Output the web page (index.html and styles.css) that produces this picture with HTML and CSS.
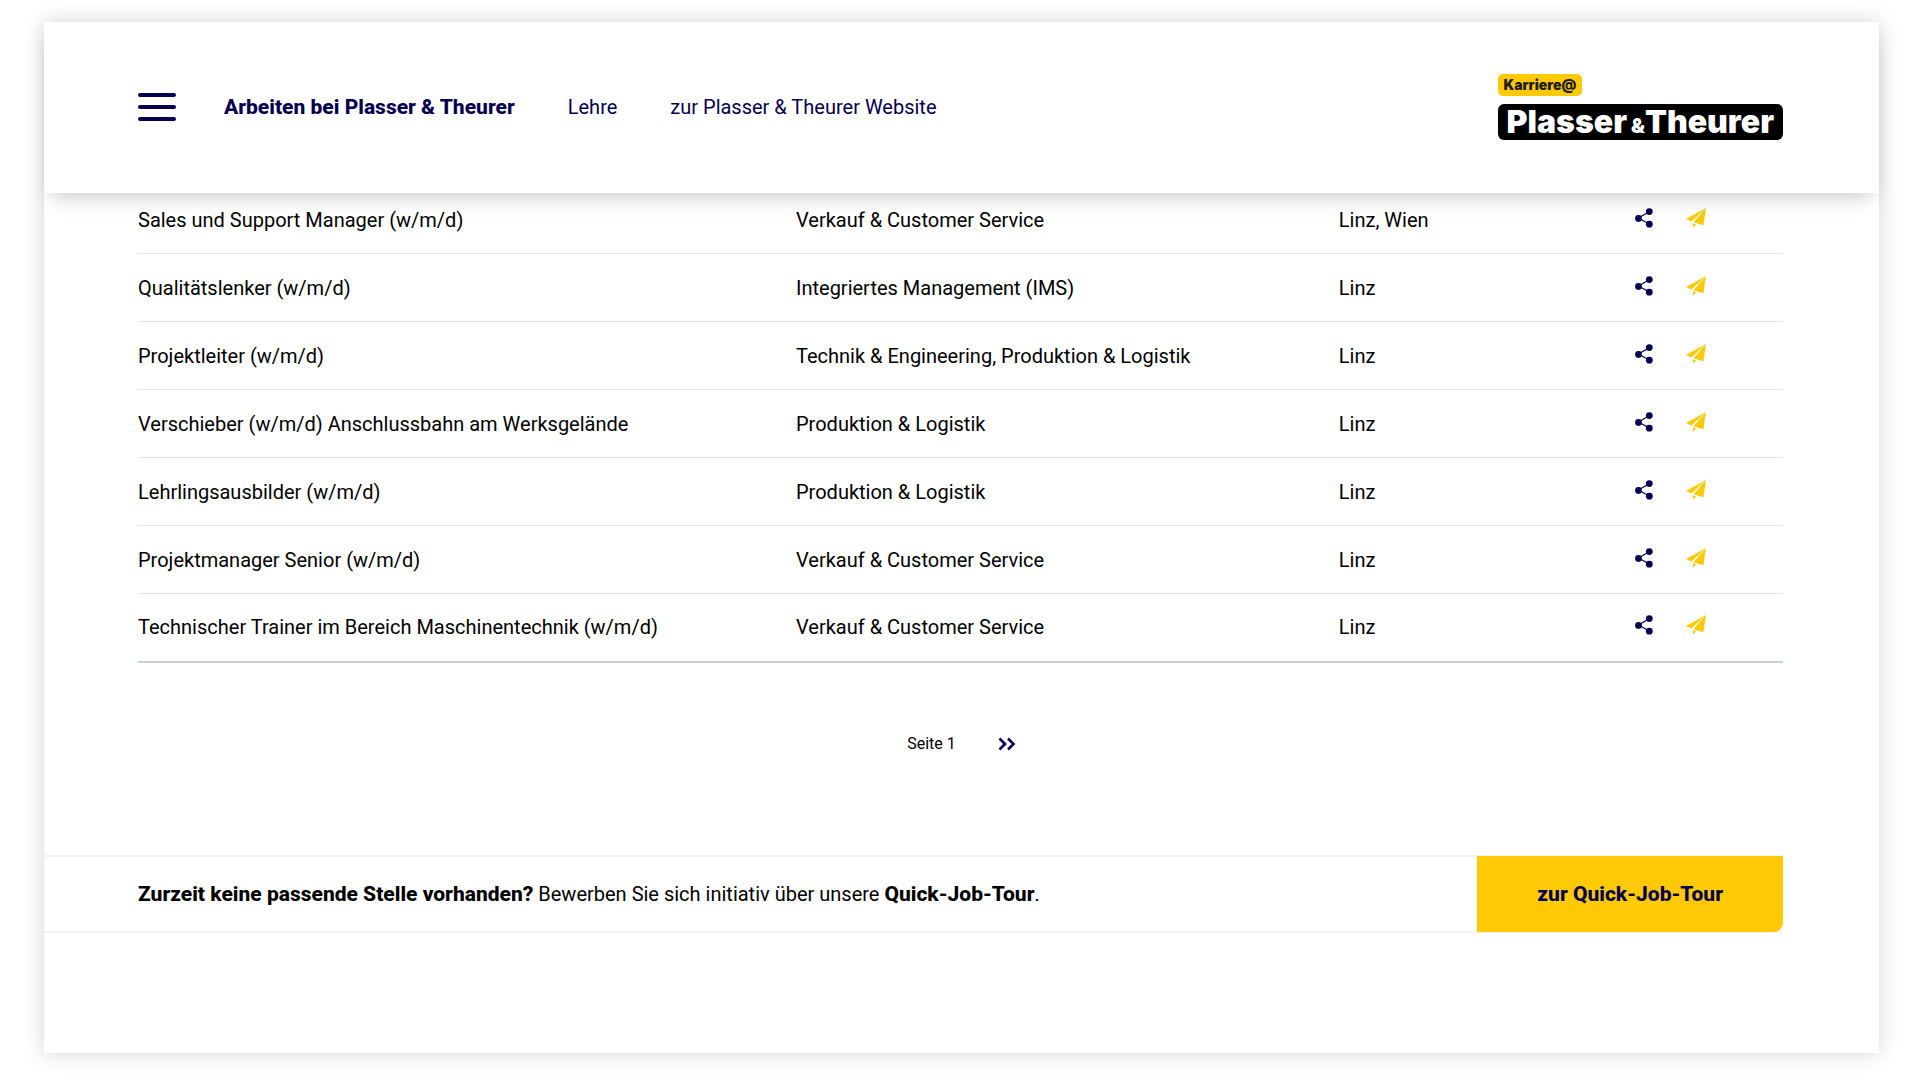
FILE: index.html
```html
<!DOCTYPE html>
<html lang="de">
<head>
<meta charset="utf-8">
<meta name="viewport" content="width=device-width, initial-scale=1">
<title>Karriere | Plasser &amp; Theurer</title>
<link rel="stylesheet" href="styles.css">
</head>
<body>
<svg class="sprite" aria-hidden="true">
  <symbol id="share" viewBox="0 0 18 20">
    <path d="M14.5 3.5 3.5 10l11 6.2" fill="none" stroke="currentColor" stroke-width="1.2"/>
    <circle cx="14.3" cy="3.6" r="3.4" fill="currentColor"/>
    <circle cx="3.5" cy="10.4" r="3.4" fill="currentColor"/>
    <circle cx="14.3" cy="16.2" r="3.4" fill="currentColor"/>
  </symbol>
  <symbol id="plane" viewBox="0 0 20 20">
    <path d="M20 0 0 11l5.300 2.500zM20 0 7.500 14.200l9.800 3.100zM7 15.200v4.600l3.200-3.600z" fill="currentColor"/>
  </symbol>
</svg>
<div class="page">
  <header class="header">
    <button class="burger" type="button" aria-label="Menü"><span></span><span></span><span></span></button>
    <nav class="nav">
      <a class="active" href="#">Arbeiten bei Plasser &amp; Theurer</a>
      <a href="#">Lehre</a>
      <a href="#">zur Plasser &amp; Theurer Website</a>
    </nav>
    <a class="logo" href="#">
      <span class="logo-tag">Karriere@</span>
      <span class="logo-name">Plasser<small>&amp;</small>Theurer</span>
    </a>
  </header>
  <main>
    <table class="jobs">
      <tbody>
        <tr><td>Sales und Support Manager (w/m/d)</td><td>Verkauf &amp; Customer Service</td><td>Linz, Wien</td><td><div class="actions"><button type="button" class="share" aria-label="Teilen"><svg><use href="#share"/></svg></button><a href="#" class="apply" aria-label="Bewerben"><svg><use href="#plane"/></svg></a></div></td></tr>
        <tr><td>Qualitätslenker (w/m/d)</td><td>Integriertes Management (IMS)</td><td>Linz</td><td><div class="actions"><button type="button" class="share" aria-label="Teilen"><svg><use href="#share"/></svg></button><a href="#" class="apply" aria-label="Bewerben"><svg><use href="#plane"/></svg></a></div></td></tr>
        <tr><td>Projektleiter (w/m/d)</td><td>Technik &amp; Engineering, Produktion &amp; Logistik</td><td>Linz</td><td><div class="actions"><button type="button" class="share" aria-label="Teilen"><svg><use href="#share"/></svg></button><a href="#" class="apply" aria-label="Bewerben"><svg><use href="#plane"/></svg></a></div></td></tr>
        <tr><td>Verschieber (w/m/d) Anschlussbahn am Werksgelände</td><td>Produktion &amp; Logistik</td><td>Linz</td><td><div class="actions"><button type="button" class="share" aria-label="Teilen"><svg><use href="#share"/></svg></button><a href="#" class="apply" aria-label="Bewerben"><svg><use href="#plane"/></svg></a></div></td></tr>
        <tr><td>Lehrlingsausbilder (w/m/d)</td><td>Produktion &amp; Logistik</td><td>Linz</td><td><div class="actions"><button type="button" class="share" aria-label="Teilen"><svg><use href="#share"/></svg></button><a href="#" class="apply" aria-label="Bewerben"><svg><use href="#plane"/></svg></a></div></td></tr>
        <tr><td>Projektmanager Senior (w/m/d)</td><td>Verkauf &amp; Customer Service</td><td>Linz</td><td><div class="actions"><button type="button" class="share" aria-label="Teilen"><svg><use href="#share"/></svg></button><a href="#" class="apply" aria-label="Bewerben"><svg><use href="#plane"/></svg></a></div></td></tr>
        <tr><td>Technischer Trainer im Bereich Maschinentechnik (w/m/d)</td><td>Verkauf &amp; Customer Service</td><td>Linz</td><td><div class="actions"><button type="button" class="share" aria-label="Teilen"><svg><use href="#share"/></svg></button><a href="#" class="apply" aria-label="Bewerben"><svg><use href="#plane"/></svg></a></div></td></tr>
      </tbody>
    </table>
    <nav class="pager" aria-label="Seiten">
      <span>Seite 1</span>
      <a href="#" aria-label="Nächste Seite"><svg viewBox="0 0 18 14"><path d="M1.500 1.500 7 7l-5.500 5.500M10 1.500 15.500 7 10 12.500" fill="none" stroke="currentColor" stroke-width="2.600"/></svg></a>
    </nav>
    <section class="cta">
      <p><strong>Zurzeit keine passende Stelle vorhanden?</strong> Bewerben Sie sich initiativ über unsere <strong>Quick-Job-Tour</strong>.</p>
      <a class="cta-button" href="#">zur Quick-Job-Tour</a>
    </section>
  </main>
</div>
</body>
</html>
```
FILE: styles.css
```css
* { box-sizing: border-box; }

body {
  margin: 0;
  padding: 22px 41px 27px 44px;
  background: #fff;
  color: #000;
  font: 20px/24px Roboto, sans-serif;
}

a { color: inherit; text-decoration: none; }
button { padding: 0; border: 0; background: none; color: inherit; font: inherit; cursor: pointer; }
strong { font-size: 21px; font-weight: 800; }
svg { display: block; }
.sprite { position: absolute; width: 0; height: 0; }

.page {
  min-height: calc(100vh - 49px);
  background: #fff;
  box-shadow: 0 0 20px rgba(0, 0, 0, .17);
}

.header {
  position: sticky;
  top: 0;
  display: flex;
  align-items: center;
  padding: 52px 96px 53px 94px;
  background: #fff;
  box-shadow: 0 10px 20px -8px rgba(0, 0, 0, .25);
  color: #04004f;
}

.burger { display: flex; flex-direction: column; gap: 8px; width: 38px; margin-right: 48px; }
.burger span { height: 4px; width: 100%; border-radius: 2px; background: #04004f; }

.nav { display: flex; gap: 53px; }
.nav .active { font-size: 21px; font-weight: 800; }

.logo {
  display: flex;
  flex-direction: column;
  align-items: flex-start;
  gap: 8px;
  margin-left: auto;
  font-family: Inter, sans-serif;
}
.logo-tag {
  padding: 0 6px;
  border-radius: 5px;
  background: #ffc905;
  color: #1d1d1b;
  font-size: 14px;
  line-height: 22px;
  font-weight: 900;
}
.logo-name {
  padding: 0 9px;
  border-radius: 6px;
  background: #000;
  color: #fff;
  font-size: 32px;
  line-height: 36px;
  font-weight: 900;
}
.logo-name small { margin-left: 4px; font-size: 20px; line-height: 20px; }

.jobs { width: calc(100% - 190px); margin: 0 96px 0 94px; border-collapse: separate; border-spacing: 0; table-layout: fixed; }
.jobs td { height: 68px; padding: 0; border-bottom: 1px solid #e4e4e9; vertical-align: middle; }
.jobs tr:first-child td { height: 61px; padding-bottom: 6px; }
.jobs tr:last-child td { height: 69px; padding-bottom: 1px; border-bottom: 2px solid #cbd0d6; }
.jobs td:nth-child(1) { width: 40%; }
.jobs td:nth-child(2) { width: 33%; }
.jobs td:nth-child(3) { width: 18%; }
.jobs td:nth-child(4) { width: 9%; }

.actions { display: flex; gap: 33px; padding-bottom: 4px; }
.share { color: #04004f; }
.apply { color: #ffc905; }
.share svg { width: 18px; height: 20px; }
.apply svg { width: 20px; height: 20px; }

.pager {
  display: flex;
  justify-content: center;
  align-items: center;
  gap: 42px;
  padding: 69px 0 99px;
  font-size: 16px;
}
.pager a { color: #04004f; }
.pager svg { width: 18px; height: 14px; }

.cta {
  display: flex;
  justify-content: space-between;
  align-items: center;
  margin-right: 96px;
  padding: 1px 0 1px 94px;
  background: linear-gradient(#f3f3f6, #f3f3f6) top / 100% 2px no-repeat, linear-gradient(#f3f3f6, #f3f3f6) bottom / 100% 2px no-repeat;
}
.cta p { margin: 0; }
.cta-button {
  padding: 26px 60px;
  border-radius: 0 0 9px 0;
  background: #ffc905;
  color: #04004f;
  font-size: 21px;
  font-weight: 800;
}
```
